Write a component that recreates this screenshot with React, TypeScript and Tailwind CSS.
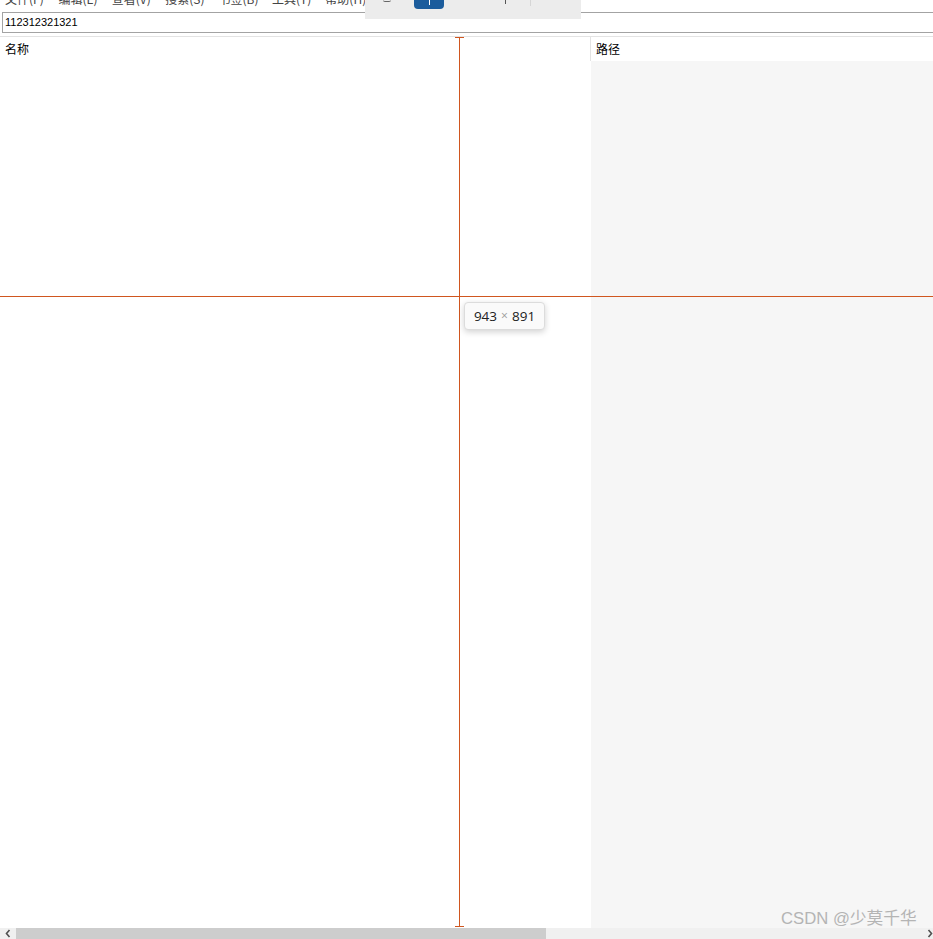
import React from "react";

const menus = ["文件(F)", "编辑(E)", "查看(V)", "搜索(S)", "书签(B)", "工具(T)", "帮助(H)"];

export default function App() {
  return (
    <div
      className="relative w-[933px] h-[939px] overflow-hidden bg-white flex flex-col"
      style={{ fontFamily: '"Noto Sans CJK SC", "Liberation Sans", sans-serif' }}
    >
      {/* menu bar (cut off at top) */}
      <div className="h-[12px] shrink-0 overflow-hidden">
        <div className="flex pl-[5px] mt-[-8px] text-[12px] leading-[14px] text-[#444]">
          {menus.map((m) => (
            <span key={m} className="w-[53.4px] shrink-0 whitespace-nowrap">
              {m}
            </span>
          ))}
        </div>
      </div>

      {/* search input */}
      <div className="h-[21px] shrink-0 ml-[2px] border border-r-0 border-[#a3a3a3] flex items-center pl-[2px]">
        <span
          className="text-[11px] text-black leading-none"
          style={{ fontFamily: '"Liberation Sans", sans-serif' }}
        >
          112312321321
        </span>
      </div>
      <div className="h-[3px] shrink-0" />
      <div className="h-px shrink-0 bg-[#e3e3e3]" />

      {/* header */}
      <div className="h-[24px] shrink-0 flex text-[12px] text-black">
        <div className="w-[590px] flex items-center pl-[5px]">名称</div>
        <div className="w-px bg-[#e3e3e3]" />
        <div className="flex-1 flex items-center pl-[5px]">路径</div>
      </div>

      {/* body */}
      <div className="flex-1 flex">
        <div className="w-[591px] bg-white" />
        <div className="flex-1 bg-[#f6f6f6]" />
      </div>

      {/* horizontal scrollbar */}
      <div className="h-[11px] shrink-0 flex bg-[#f0f0f0]">
        <div className="w-[16px] flex items-center justify-center">
          <svg width="8" height="9" viewBox="0 0 8 9">
            <path d="M5.5 1 L2.5 4.5 L5.5 8" stroke="#505050" strokeWidth="1.6" fill="none" />
          </svg>
        </div>
        <div className="w-[530px] bg-[#cdcdcd]" />
        <div className="flex-1" />
        <div className="w-[6px] flex items-center">
          <svg width="6" height="9" viewBox="0 0 6 9">
            <path d="M1.5 1 L4.5 4.5 L1.5 8" stroke="#505050" strokeWidth="1.6" fill="none" />
          </svg>
        </div>
      </div>

      {/* floating toolbar overlay (cut off) */}
      <div className="absolute left-[365px] top-0 w-[216px] h-[19px] bg-[#ececec]">
        <div className="absolute left-[18px] top-0 w-[8px] h-[2px] border-b border-[#666] rounded-b" />
        <div className="absolute left-[49px] top-0 w-[30px] h-[9px] bg-[#1b5c9c] rounded-b-[4px] flex justify-center">
          <div className="w-px h-[5px] bg-white" />
        </div>
        <div className="absolute left-[140px] top-0 w-px h-[4px] bg-[#555]" />
        <div className="absolute left-[165px] top-0 w-px h-[6px] bg-[#d6d6d6]" />
      </div>

      {/* measurement lines */}
      <div className="absolute left-[459px] top-[37px] w-px h-[890px] bg-[#d0561f]" />
      <div className="absolute left-[455px] top-[37px] w-[9px] h-px bg-[#d0561f]" />
      <div className="absolute left-[455px] top-[926px] w-[9px] h-px bg-[#d0561f]" />
      <div className="absolute left-0 top-[296px] w-[933px] h-px bg-[#d0561f]" />

      {/* size tooltip */}
      <div
        className="absolute left-[464px] top-[302px] w-[81px] h-[28px] bg-[#fafafa] border border-[#dcdcdc] rounded-[4px] shadow-[0_2px_6px_rgba(0,0,0,0.18)] flex items-center justify-center text-[13.5px] text-[#222]"
        style={{ fontFamily: '"Open Sans", "Noto Sans", sans-serif' }}
      >
        943 <span className="text-[#999] mx-[4px] text-[12px]">×</span> 891
      </div>

      {/* watermark */}
      <div
        className="absolute left-[781px] top-[909px] text-[16.7px] leading-[20px] text-[#b4b4b4] whitespace-nowrap"
        style={{ fontFamily: '"Liberation Sans", "Noto Sans CJK SC", sans-serif' }}
      >
        CSDN @少莫千华
      </div>
    </div>
  );
}
